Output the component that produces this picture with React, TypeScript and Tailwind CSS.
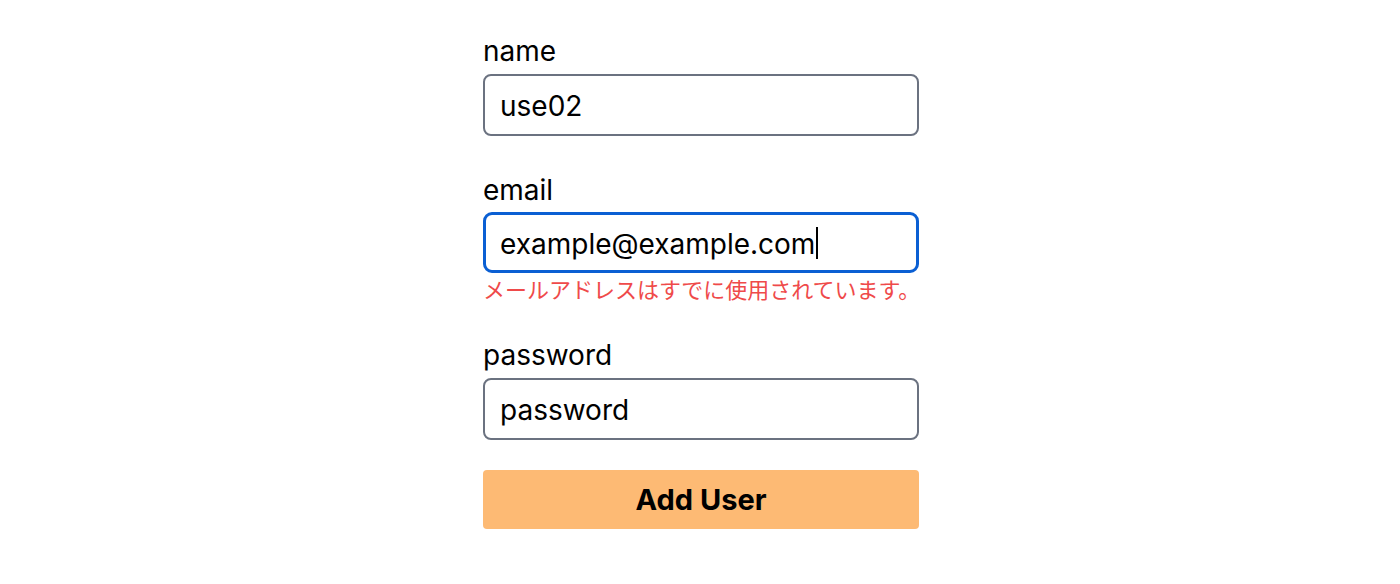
import React from "react";

const font = { fontFamily: '"Inter", "Noto Sans CJK JP", sans-serif' };
const jp = { fontFamily: '"Noto Sans CJK JP", sans-serif' };

export default function App() {
  return (
    <div className="w-full min-h-[584px] bg-white flex justify-center" style={font}>
      <form className="w-[438px] pl-[2px] pt-[33px] text-black" onSubmit={(e) => e.preventDefault()}>
        <div>
          <label className="block text-[28px] leading-[36px]">name</label>
          <div className="mt-[5px] h-[62px] border-2 border-[#6b7280] rounded-[8px] px-[15px] flex items-center text-[28px]">
            <span className="translate-y-[1px]">use02</span>
          </div>
        </div>

        <div className="mt-[36px]">
          <label className="block text-[28px] leading-[36px]">email</label>
          <div className="mt-[4px] h-[61px] border-[3px] border-[#0a5fd3] rounded-[9px] px-[14px] flex items-center text-[28px]">
            <span className="translate-y-[1px]">example@example.com</span>
            <span className="inline-block w-[1.5px] h-[32px] bg-black ml-[1px]"></span>
          </div>
          <p className="mt-[1px] text-[22px] leading-[28px] text-[#ef4a4a] whitespace-nowrap" style={jp}>
            メールアドレスはすでに使用されています。
          </p>
        </div>

        <div className="mt-[35px]">
          <label className="block text-[28px] leading-[36px]">password</label>
          <div className="mt-[5px] h-[62px] border-2 border-[#6b7280] rounded-[8px] px-[15px] flex items-center text-[28px]">
            <span className="translate-y-[1px]">password</span>
          </div>
        </div>

        <button
          type="submit"
          className="mt-[30px] w-full h-[59px] bg-[#fdba74] rounded-[4px] text-[29px] font-bold text-black"
        >
          Add User
        </button>
      </form>
    </div>
  );
}
